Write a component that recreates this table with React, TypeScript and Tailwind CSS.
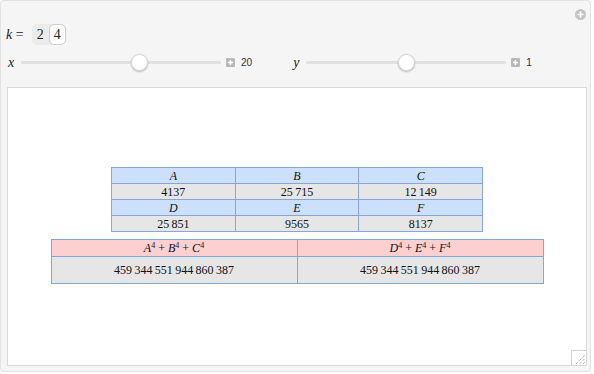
import React from "react";

const serif = { fontFamily: '"Liberation Serif", "Times New Roman", serif' };

function PlusBox() {
    return (
        <svg width="9" height="9" viewBox="0 0 9 9" className="shrink-0">
            <rect x="0" y="0" width="9" height="9" rx="1" fill="#b9b9b9" />
            <path d="M4.5 2v5M2 4.5h5" stroke="#fff" strokeWidth="1.4" />
        </svg>
    );
}

function Slider({ label, pos, value, width }: { label: string; pos: number; value: string; width: number }) {
    return (
        <div className="flex items-center">
            <span className="italic text-[14px] text-[#222] w-[13px]" style={serif}>
                {label}
            </span>
            <div className="relative h-[17px] flex items-center" style={{ width }}>
                <div className="h-[3px] w-full rounded-full bg-[#e0e0e0]" />
                <div
                    className="absolute top-0 h-[17px] w-[17px] rounded-full bg-white border border-[#d6d6d6] shadow-[0_1px_2px_rgba(0,0,0,0.25)]"
                    style={{ left: pos - 8.5 }}
                />
            </div>
            <div className="ml-[5px] flex items-center gap-[6px]">
                <PlusBox />
                <span className="text-[10px] text-[#333]" style={{ fontFamily: '"Liberation Sans", Arial, sans-serif' }}>
                    {value}
                </span>
            </div>
        </div>
    );
}

const t1 = [
    ["A", "B", "C"],
    ["4137", "25\u2009715", "12\u2009149"],
    ["D", "E", "F"],
    ["25\u2009851", "9565", "8137"],
];

export default function App() {
    return (
        <div className="w-[594px] h-[374px] bg-white">
            <div className="w-[591px] h-[372px] bg-[#f5f5f5] border border-[#e2e2e2] rounded-[4px] flex flex-col">
                <div className="h-[19px] flex justify-end items-end pr-[4px]">
                    <svg width="11" height="11" viewBox="0 0 11 11">
                        <circle cx="5.5" cy="5.5" r="5.5" fill="#c4c4c4" />
                        <path d="M5.5 2.6v5.8M2.6 5.5h5.8" stroke="#fff" strokeWidth="1.6" />
                    </svg>
                </div>
                <div className="mt-[4px] h-[21px] flex items-center pl-[5px]">
                    <span className="text-[14px] text-[#222]" style={serif}>
                        <i>k</i> =
                    </span>
                    <div className="ml-[8px] flex h-[21px] rounded-[5px] bg-[#ebebeb]">
                        <div className="w-[17px] flex items-center justify-center text-[14px] text-[#222]" style={serif}>
                            2
                        </div>
                        <div
                            className="w-[17px] flex items-center justify-center text-[14px] text-[#222] bg-white border border-[#cfcfcf] rounded-[5px]"
                            style={serif}
                        >
                            4
                        </div>
                    </div>
                </div>
                <div className="mt-[8px] h-[18px] flex items-center pl-[7px]">
                    <Slider label="x" pos={118} value="20" width={200} />
                    <div className="ml-[41px]">
                        <Slider label="y" pos={100} value="1" width={200} />
                    </div>
                </div>
                <div className="mt-[16px] ml-[6px] w-[580px] h-[279px] bg-white border border-[#d9d9d9] flex flex-col items-center pt-[79px] gap-[7px] font-['Liberation_Serif',serif]">
                    <table className="border-collapse w-[372px] text-[12px] text-[#111] table-fixed font-['Liberation_Serif',serif]">
                        <tbody>
                            {t1.map((row, i) => (
                                <tr key={i} className={i % 2 === 0 ? "bg-[#cde0fb] h-[16px]" : "bg-[#e6e6e6] h-[16px]"}>
                                    {row.map((c) => (
                                        <td
                                            key={c}
                                            className={`border border-[#86a6d8] text-center leading-[14px] p-0 ${i % 2 === 0 ? "italic" : ""}`}
                                        >
                                            {c}
                                        </td>
                                    ))}
                                </tr>
                            ))}
                        </tbody>
                    </table>
                    <table className="border-collapse w-[493px] text-[12px] text-[#111] table-fixed font-['Liberation_Serif',serif]">
                        <tbody>
                            <tr className="bg-[#fcd0d0] h-[17px]">
                                <td className="border border-[#86a6d8] text-center leading-[14px] p-0">
                                    <i>A</i>
                                    <sup className="text-[8px]">4</sup> + <i>B</i>
                                    <sup className="text-[8px]">4</sup> + <i>C</i>
                                    <sup className="text-[8px]">4</sup>
                                </td>
                                <td className="border border-[#86a6d8] text-center leading-[14px] p-0">
                                    <i>D</i>
                                    <sup className="text-[8px]">4</sup> + <i>E</i>
                                    <sup className="text-[8px]">4</sup> + <i>F</i>
                                    <sup className="text-[8px]">4</sup>
                                </td>
                            </tr>
                            <tr className="bg-[#e6e6e6] h-[27px]">
                                <td className="border border-[#86a6d8] text-center p-0">459&#8201;344&#8201;551&#8201;944&#8201;860&#8201;387</td>
                                <td className="border border-[#86a6d8] text-center p-0">459&#8201;344&#8201;551&#8201;944&#8201;860&#8201;387</td>
                            </tr>
                        </tbody>
                    </table>
                    <div className="flex-1 self-stretch flex justify-end items-end">
                        <svg width="15" height="15" viewBox="0 0 15 15">
                            <rect x="0.5" y="0.5" width="15" height="15" fill="white" stroke="#d0d0d0" />
                            <path d="M5 14L14 5M8.5 14L14 8.5M12 14L14 12" stroke="#999" strokeWidth="1" strokeDasharray="1 1" />
                        </svg>
                    </div>
                </div>
            </div>
        </div>
    );
}
